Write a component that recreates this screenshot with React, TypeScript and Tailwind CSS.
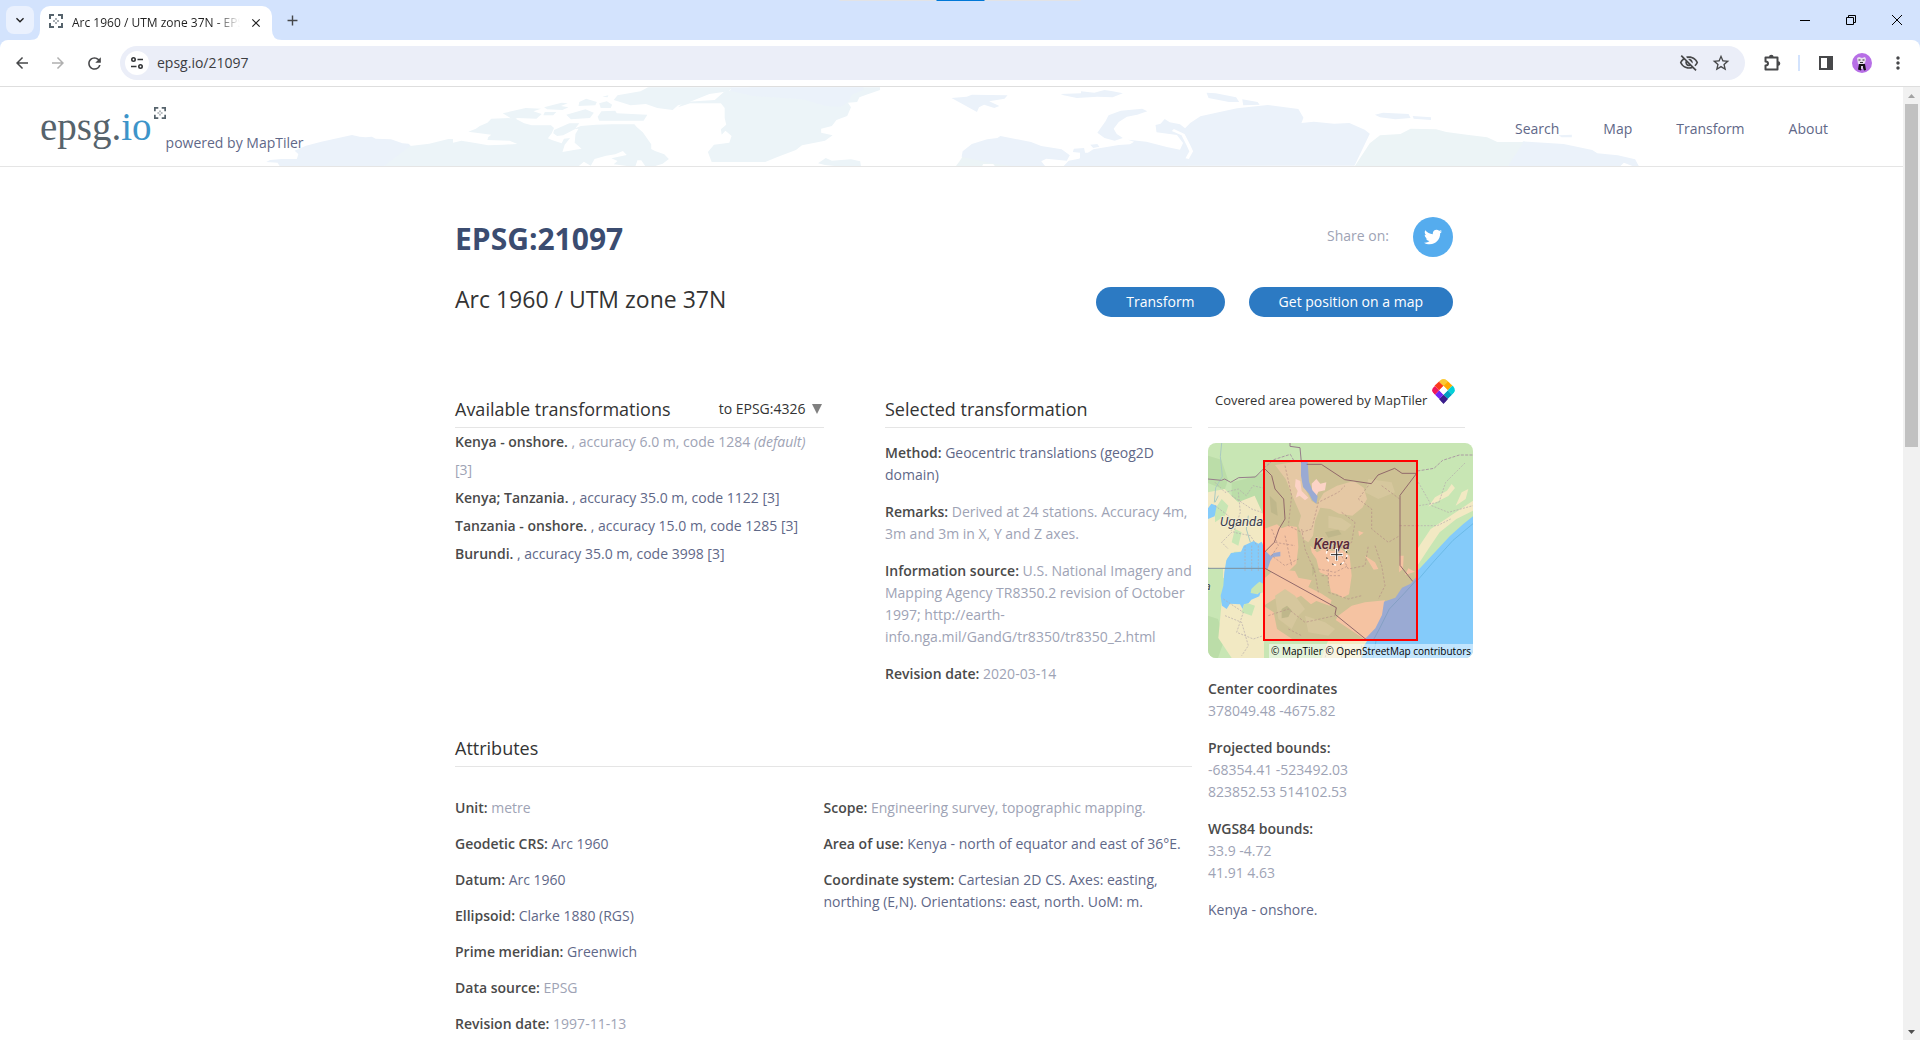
import type { ReactNode } from "react";
import {
  MdArrowBack,
  MdArrowForward,
  MdRefresh,
  MdStarBorder,
  MdOutlineVisibilityOff,
  MdMoreVert,
  MdClose,
  MdAdd,
  MdKeyboardArrowDown,
} from "react-icons/md";
import { FaTwitter } from "react-icons/fa";

function TargetMark({ className }: { className: string }) {
  return (
    <svg viewBox="0 0 14 14" className={className} fill="none" stroke="#56636c" strokeWidth="2" aria-hidden="true">
      <path d="M1 5V1h4M9 1h4v4M13 9v4H9M5 13H1V9" />
      <path d="M7 4v2M7 8v2M4 7h2M8 7h2" strokeWidth="1" />
    </svg>
  );
}

function TabStrip() {
  return (
    <div className="relative flex h-10 shrink-0 items-end bg-[#d3e3fd]">
      <div className="absolute top-0 left-1/2 flex h-px w-[241px] -translate-x-1/2 justify-center bg-[#e2e3e6]">
        <div className="h-px w-12 bg-[#0078d7]" />
      </div>
      <button aria-label="Search tabs" className="mb-1.5 ml-1.5 flex size-7 items-center justify-center rounded-lg bg-[#eaf1fe]">
        <MdKeyboardArrowDown className="size-4 text-[#1f1f1f]" stroke="currentColor" />
      </button>
      <div className="relative ml-1.5 flex h-[34px] w-[232px] items-center rounded-t-[10px] bg-white pl-[9px] pr-2">
        <svg viewBox="0 0 10 10" className="absolute bottom-0 -left-2.5 size-2.5" aria-hidden="true"><path d="M10 0v10H0Q10 10 10 0z" fill="#fff" /></svg>
        <svg viewBox="0 0 10 10" className="absolute -right-2.5 bottom-0 size-2.5" aria-hidden="true"><path d="M0 0v10h10Q0 10 0 0z" fill="#fff" /></svg>
        <TargetMark className="mb-1 size-[14px] shrink-0" />
        <span className="ml-[9px] min-w-0 flex-1 overflow-hidden whitespace-nowrap bg-linear-to-r from-[#1f1f1f] from-85% to-transparent bg-clip-text text-xs text-transparent">
          Arc 1960 / UTM zone 37N - EPSG:21097
        </span>
        <button aria-label="Close tab" className="ml-2 flex size-4 items-center justify-center">
          <MdClose className="size-3.5 text-[#1f1f1f]" stroke="currentColor" />
        </button>
      </div>
      <button aria-label="New tab" className="mb-2.5 ml-2.5 flex size-5 items-center justify-center">
        <MdAdd className="size-[17px] text-[#45474a]" />
      </button>
      <div className="mb-3 ml-auto mr-[17px] flex items-center gap-[34px] text-black">
        <button aria-label="Minimize">
          <svg viewBox="0 0 12 16" className="h-4 w-3" aria-hidden="true"><path d="M1 8.500h10" stroke="currentColor" /></svg>
        </button>
        <button aria-label="Restore">
          <svg viewBox="0 0 12 16" className="h-4 w-3" fill="none" stroke="currentColor" aria-hidden="true">
            <path d="M1.500 5.500h7v7h-7zM3.500 5.500v-2h7v7h-2" />
          </svg>
        </button>
        <button aria-label="Close window">
          <svg viewBox="0 0 12 16" className="h-4 w-3" stroke="currentColor" aria-hidden="true"><path d="M1 3l10 10M11 3L1 13" /></svg>
        </button>
      </div>
    </div>
  );
}

function Toolbar() {
  return (
    <div className="shrink-0 bg-[#d3e3fd]">
      <div className="flex h-[47px] items-center rounded-t-lg border-b border-[#dedede] bg-white pl-3">
        <button aria-label="Back" className="flex size-5 items-center justify-center"><MdArrowBack className="size-[18px] text-[#47484a]" stroke="currentColor" /></button>
        <button aria-label="Forward" className="ml-4 flex size-5 items-center justify-center"><MdArrowForward className="size-[18px] text-[#b0b0b0]" /></button>
        <button aria-label="Reload" className="ml-4 flex size-5 items-center justify-center"><MdRefresh className="size-[19px] text-[#47484a]" /></button>
        <div className="ml-4 flex h-[34px] flex-1 items-center rounded-full bg-[#ebeef8] pl-[5px] pr-3.5">
          <button aria-label="Site information" className="flex size-6 items-center justify-center rounded-full bg-white">
            <svg viewBox="0 0 14 14" className="size-3.5" fill="none" stroke="#333537" strokeWidth="1.600" aria-hidden="true">
              <circle cx="3.500" cy="3.500" r="1.700" />
              <path d="M7.500 3.500H13M1 10.500h5.500" />
              <circle cx="10.500" cy="10.500" r="1.700" />
            </svg>
          </button>
          <input
            aria-label="Address"
            defaultValue="epsg.io/21097"
            className="ml-2 min-w-0 flex-1 bg-transparent text-sm leading-5 text-[#3c3d42] outline-none"
          />
          <button aria-label="Third-party cookies blocked"><MdOutlineVisibilityOff className="size-5 text-[#47484a]" /></button>
          <button aria-label="Bookmark this page" className="ml-3"><MdStarBorder className="size-5 text-[#47484a]" stroke="currentColor" /></button>
        </div>
        <button aria-label="Extensions" className="ml-[17px]">
          <svg viewBox="0 0 20 20" className="size-5" aria-hidden="true">
            <path d="M3.500 4.500h12v12h-12v-4q2.500 0 2.500-2t-2.500-2z" fill="none" stroke="#47484a" strokeWidth="2" strokeLinejoin="round" />
            <path d="M7 4a2.300 2.300 0 0 1 4.600 0zM16 8.200a2.300 2.300 0 0 1 0 4.600z" fill="#47484a" />
          </svg>
        </button>
        <div className="ml-4 h-4 w-0.5 bg-[#d3e3fd]" />
        <button aria-label="Side panel" className="ml-[18px]">
          <svg viewBox="0 0 16 16" className="size-4" aria-hidden="true">
            <path d="M2 2h12v12H2z" fill="none" stroke="#47484a" strokeWidth="2" />
            <path d="M9 1h6v14H9z" fill="#47484a" />
          </svg>
        </button>
        <button aria-label="Profile" className="ml-[18px]">
          <svg viewBox="0 0 20 20" className="size-5" aria-hidden="true">
            <circle cx="10" cy="10" r="10" fill="#b76fe6" />
            <path d="M5 5l2-1 3 1 3-1 1 2-1 4-3 2-4-1z" fill="#e8e0ee" />
            <path d="M6.500 7h2M10.500 7h2M8 9.500h3" stroke="#333" strokeWidth="1" />
            <path d="M7 11h6l1 6-2 .5-1.500-4-1.500 4-3-1z" fill="#151018" />
            <path d="M9 13h2v3H9z" fill="#d9c9e6" />
          </svg>
        </button>
        <button aria-label="Menu" className="ml-4 mr-3"><MdMoreVert className="size-5 text-[#47484a]" /></button>
      </div>
    </div>
  );
}

function WorldBackdrop() {
  return (
    <svg className="absolute inset-y-0 left-0 h-[79px] w-[1903px]" viewBox="0 0 1903 79" fill="#ecf4f8" aria-hidden="true">
      <g transform="translate(280 -7) scale(.3827 .3333)">
        <path fill="#ebf2fa" d="M0 260l-6-12-30-2 10-6 30-3 40 0 4-15-10-10 30-15 40-12 80-20 20 5 16 2 16-2 10 6 40 2 30 12 16 1 8 9-8 60z" />
        <path d="M270 260l70-62 50-7 50-14 12 0 0 11 22-6 40 8 30 6 40-2 36-2-20-10-58-2 2-8 8-8-60-9 20-9 10-8 20-10 10-12 60-2 26 16 20 6 50 0 8 8-6 16-10 15 12 6 24 9 6-14 16-2-14 20-6 22 30-6 20-4-18-18 2-26 8-16-14 2 20-10 40-4 40-1 60 0 6 8 16 16 10 16 12 20 0 14 10 6 24 10 12 14-16 14-22 8 0 6-22-4-12-20-10 0-6 20-56-8 10-10-16-8 40-10-10-12-20 10-24 4-30 10-10 20-18-12-20 20 0 6z" />
        <path d="M582 100l60-16 40 2-20 8 22 8-14 14-50-2-10 6zM690 82l46-14 16 2-18 8 20 4-16 8-40-2zM692 96l30 0-8 10-26 0zM748 104l50-16 22 10-10 16-50 4zM782 66l18-10 28 10-4 10-44 2zM834 70l20-6 14 10-4 10-26 0zM840 94l36-2 4 8 80 4-10 18-116 0-4-12zM872 60l10-14 60-12 20-12 220 0-10 12-50 8-60 28-22 6-14 14-40-6-30-12-40 4zM716 150l40-20 26 0-12 18-30 18-16 2-10-8zM842 50l16-4-2 6z" />
        <path d="M1040 82l16-16 80-6 26-26 70-12 336 0 0 8-36 14-18 8-6 14-24 2 8 14-4 10-6 16-28 12-12 18-28 8 0 12 30 8-20 16-60 14-16 14-50 22-30 14-140 0-10-30 16-22 40-6 6-20-16-16-10 12-2-16 14-14-4-20 0-30-10-14-80 0z" />
        <path fill="#ebf2fa" d="M1180 22h344v8l-30 14-8 20-20 16-40-2-60-20-130-10-60-16z" />
        <path d="M1406 250l20-16 16 8 50-4 24 6 2 14-60 1-34-4z" />
      </g>
      <g transform="translate(880 -7) scale(.5102 .3333)" fill="#ebf2fa">
        <path d="M140 54l30-4 10-6 70 2-6 10-30 8 20 14-10 6-20-10-10 8-4 14-40-34zM354 42l40-2 0-6 26 4 20-8 16 4 20 6-20 12-30-2-40 4-26-8zM514 86l10 8-20 10-20 6-16 16-10 20 6 16 12 12-16 8-20-8-14-16 16-34 6-18 24-14zM640 38l18 2 40 12 6 14-20 0-40-12zM710 58l30 8 4 8-32 2z" />
        <path fill="#ecf4f6" d="M148 260l8-16 10-24 40 4 60 36h-40l-4-8-20 0-2 8z" />
        <path d="M160 230l2-16 18-22 30-14 20-4 6-6 60 18 20 12 40 10 16 18-6 16-40-6-10 8 8 15h-60l-40-8z" />
        <path d="M360 258l10-16 20-6 14-14 14-14 50-13 22-2 8-8-12-6 36 6 40 16 26 8 6-20-12-24-40-8-2-22 10-4 8-14 10 10 20 6 10 12 10-16 20-20 40-14 32-10 60-10 60 12 10 26-4 16 24-4 40 6 30-2 30 20 10 12-30 96z" />
        <path fill="#ecf4f6" d="M930 260l30-70 20-24 40-4 20-16 50 2 20 8 40 8 40 8 20 14 50 0 60 12-30 62z" />
        <path d="M1230 260l30-70 0-6 80 8 56 18 10 10 40 6 34 12 8 22-10 0-20-12-8 12zM970 104l16-6 50 4 4 12-30 4-30-6zM1044 108l36 4 0 8-34-4zM1330 166l26-2 0 8-20 0zM380 206l20-2 2 14 16 0-16 20-10 2 0-22-14-2zM412 194l14-2 4 8-12 4z" />
        <path fill="none" stroke="#fff" strokeWidth="7" d="M574 150l20 14 10 30 6 20-8 22" />
      </g>
    </svg>
  );
}

const navLinks = ["Search", "Map", "Transform", "About"];

function SiteHeader() {
  return (
    <header className="relative flex h-20 shrink-0 items-center overflow-hidden border-b border-[#e5e5e5] pl-10 pr-[75px]">
      <WorldBackdrop />
      <a href="#home" className="relative flex h-full items-start pt-4" aria-label="epsg.io">
        <span className="font-['Liberation_Serif',serif] text-[39px] leading-[47px] text-[#56636c]">
          epsg.<span className="text-[#3d94c9]">io</span>
        </span>
        <TargetMark className="mt-1 ml-0.5 size-3" />
      </a>
      <a href="#maptiler" className="relative mt-8 leading-5 text-[#5f6888]">powered by MapTiler</a>
      <nav className="relative ml-auto flex gap-11 pt-1 text-[#5f6888]">
        {navLinks.map((label) => (
          <a key={label} href={"#" + label.toLowerCase()}>{label}</a>
        ))}
      </nav>
    </header>
  );
}

function MapTilerMark() {
  return (
    <svg viewBox="0 0 70 76" className="h-[25px] w-[23px]" aria-hidden="true">
      <clipPath id="pin"><path d="M24 5Q35-4 46 5L65 23Q74 34 65 45L35 76 5 45Q-4 34 5 23z" /></clipPath>
      <g clipPath="url(#pin)">
        <path fill="#fbc935" d="M35-6l24 14-24 14-13-13z" />
        <path fill="#fbc935" d="M22 9l13 13L48 9V-4H22z" />
        <path fill="#ffaa01" d="M48 9V2l20 13-7 6-13 13-13-13z" />
        <path fill="#03d1d9" d="M61 21l5-4 9 17-14 14-13-14z" />
        <path fill="#00a1c1" d="M48 34l13 14-13 13-13-13z" />
        <path fill="#3b1e8c" d="M35 48l14 13-14 18-14-18z" />
        <path fill="#7226f5" d="M22 34l13 14-13 13L9 48z" />
        <path fill="#f1175d" d="M9 21l13 13L9 48-5 34z" />
        <path fill="#fb3a1b" d="M22 9V2L2 15l7 6 13 13 13-13z" />
        <path fill="#fff" d="M35 21l13 13-13 13-13-13z" />
      </g>
    </svg>
  );
}

function CoverageMap() {
  return (
    <div className="relative w-[265px] overflow-hidden rounded-lg">
      <svg viewBox="39 42 795 645" className="block h-[215px] w-full" role="img" aria-label="Map of Kenya with the covered area outlined">
        <path fill="#c8e6b4" d="M39 42h795v645H39z" />
        <path fill="#bbdda8" d="M39 80l40 12 20 60-10 30-50-20zM110 160l40-10 60-20v160l-30-20-10-40-60-20zM39 560l30 10 20 60-20 57H39z" />
        <path fill="#f2e9c3" d="M39 190l50-10 40 40 50-20 27 60v80l-27 28-60 0-22 20-10 60-48-35zM80 520l40-10 87-20v197H110l-40-60z" />
        <path fill="#c8e6b4" d="M60 240l20-30 20 20-10 30-30 20zM120 300l20 10-10 40-20-10zM39 420h45v90l-20 40-25-10zM150 520l30 10-10 30-30-10z" />
        <path fill="#f2e9c3" d="M834 245l-50 25-50 40-34 50-33 50v-50l40-60 60-40 67-45zM770 165l-14 20-36 20-20 28 20-12 40-20 20-24zM800 190l20-10-8 30-30 20zM400 632h140l-20 55H380z" />
        <path fill="#84cbfa" d="M834 262l-30 24-40 36-50 54-47 50-35 36-40 60-60 90-25 38-6 37h333z" />
        <path fill="none" stroke="#5fb1dd" strokeWidth="2" d="M834 284l-60 50-60 66-60 70-60 70-50 90-10 57" />
        <path fill="#84cbfa" d="M88 430l6-36 14-22 30-4 8-18 30-14 14 8 10-6 7 20v76l-2 30-12-6-14 12-10 10-2 12 20 4 10-8-4 14-24 10-8 10-14 4-4 14-8-14-30-2-10 16-14-10-4-30 8-30zM39 270l20-8 6-32-16-6-10 14z" />
        <path fill="none" stroke="#a9c9c0" strokeWidth="3" d="M80 42l-4 40 6 60-20 34-4 44M60 220l10-20M160 260l-6 40 12 40" />
        <path fill="none" stroke="#b4a9ac" strokeWidth="2" strokeDasharray="6 4" d="M60 160l30 30 40-10 24 20 20-30 34 8M60 230l40 30 10 50-30 30 20 20M110 200l60 40 30 10M130 190l6 60-20 60 50 10 20 30M150 350v80M170 350v80M190 350v80M85 510l60 40-20 60 50 20 30-10M90 560l50 20 20 70-20 30M670 160l40 70 50 20 74-20M672 230l60-10 20-60 60-60M667 290h60l40-20M500 650v37M440 650v37M400 650l-10 37" />
        <g stroke="none">
          <path fill="#cdc194" d="M206 95h461v538H206z" />
          <path fill="#e5c8a4" d="M240 108l80-12 8 40-8 20 14 30 16 30 16 10 20-34 40-22 50-14 30 20 10 34-14 26-30 24-40-6-26-14-30-4-16 40-6 44-14 20-16-10-14-40 8-30-26-60-20-50z" />
          <path fill="#fcd3c6" d="M302 150l14 6 4 30 20 20-10 8-16-14-12 6 6-20-8-14zM350 164l14-14 12 14 18-4-4 24-20 4-8 18-10-16z" />
          <path fill="#f5c3a2" d="M206 300l40-14 14 12 20-8 26 4 4 60-6 50-20 20-30 0-14 10-34-14zM240 420l60 6 10 20 40 8-10 20 40 20 30 20-6 16-40-14-16 10-30-26-20 10-30-14-30 14-32 20v-80zM346 350l20 20 18-10 30 6 20-10 30 24 6 60-8 56-20 10-14-10-20-6-10-50-24-10-10-40-14-20zM430 560l40-30 40-10 60-6-8 50-26 50-16 19h-8l-90-60zM206 530l30 20 10 50 50 33h-90zM510 380l30 20 10 20-14 2zM614 380h12l-2 40-12 10zM640 418l20 10-30 10zM490 305l16 6-14 10z" />
          <path fill="#d6c79d" d="M240 500l30-20 30 20 30 40-20 20-20 40-40-30zM330 560l60 20 30 20-20 20-60-10zM400 260l40 8 30 20-20 18-50-10zM520 150l70 10 10 30-50 20-40-20z" />
          <path fill="#bfb78b" d="M260 540l16-10 14 14-10 20-20 4zM352 400l10 26-10 16zM390 310l40-8 10 14-40 10zM224 200l20 20 4 40-20-10z" />
          <path fill="#9aaad3" d="M318 98h20l4 60 10 26 16 18-4 22-12-10-10-20-18-20-6-34zM206 360l20 20 10-8 20-4 0 14-22 2-8 12-8 24-12 2zM667 440l-20 24-26 12-20 30-34 12-6 40-20 40-34 35h160z" />
        </g>
        <path fill="none" stroke="#85a0c4" strokeWidth="3" d="M667 450l-40 44-44 46-30 60-18 33" />
        <path fill="none" stroke="#b58f86" strokeWidth="2" strokeDasharray="7 5" d="M270 110l20 90-10 90 40 20 30-10 20-80 60-30 20-20M520 170l-30 40 40 30v60l50 40 34-20M440 250l40 30-10 60-40 20 30 60 50-10 10-60M560 170l54 40M614 290h50M540 350l20 60 10 60-20 40M320 300l10 60 30 70 10 60M370 420l50 10 40-20M400 490l60 20 40-10M230 300l20 50-20 30 40 30 40-20M240 340l60 10M270 320l20 90M220 560l60-20 50 40 90-20M280 600l40 20M380 440h60M400 420v50" />
        <path fill="none" stroke="#967c8a" strokeWidth="3" d="M39 150l40 4 10-4 18 10 24-14 50-2 24-24M285 42v10l30 4 4 44" />
        <path fill="none" stroke="#aa9aa2" strokeWidth="3" strokeDasharray="9 4" d="M206 118l30-26 50-16 10 18M667 126l50-8 26-24 50-16h41" />
        <path fill="none" stroke="#91696a" strokeWidth="3" d="M210 120l20 20 10 40 26 30 4 60-18 30-14 40-30 30M335 106h44l70 46 80 12 20-26 50-20 22 15h44l-50 66v210l38 48M206 416l218 120-4 20 94 76" />
        <path stroke="#7d909c" strokeWidth="3" d="M39 418h167" />
        <path fill="none" stroke="#f00" strokeWidth="6" d="M207 96h459v537H207z" />
        <g fill="none">
          <circle cx="425" cy="377" r="31" stroke="#fff" strokeWidth="4" strokeDasharray="9 16" />
          <circle cx="425" cy="377" r="31" stroke="#222" strokeWidth="3" strokeDasharray="5 20" strokeDashoffset="-8" />
        </g>
        <g fontFamily="Roboto, sans-serif" fontStyle="italic" paintOrder="stroke" strokeWidth="4">
          <text x="75" y="291" fontSize="39" fill="#3a3c4c" stroke="#f4f0da">Uganda</text>
          <text x="356" y="360" fontSize="41" fontWeight="500" fill="#57283a" stroke="#e4c8a8">Kenya</text>
          <text x="29" y="482" fontSize="34" fill="#3a3c4c" stroke="#dcebc0">a</text>
        </g>
        <path d="M425 358v38M406 377h38" stroke="#fff" strokeWidth="8" />
        <path d="M425 360v34M408 377h34" stroke="#222" strokeWidth="3" />
      </svg>
      <p className="absolute right-0 bottom-0 bg-white/50 px-0.5 text-[10px] leading-[14px] whitespace-nowrap text-black">
        <a href="#tiles">© MapTiler</a> <a href="#osm">© OpenStreetMap contributors</a>
      </p>
    </div>
  );
}

type FieldProps = { label: string; link?: boolean; children: ReactNode };

function Field({ label, link, children }: FieldProps) {
  return (
    <p>
      <span className="font-semibold text-[#4a4a4a]">{label}</span>{" "}
      {link ? <a href="#detail" className="text-[#5f6888]">{children}</a> : children}
    </p>
  );
}

function SectionTitle({ children }: { children: ReactNode }) {
  return <h3 className="h-[34px] border-b border-[#e5e5e5] text-lg leading-[30px] text-[#333]">{children}</h3>;
}

const transformations = [
  { name: "Kenya; Tanzania.", detail: ", accuracy 35.0 m, code 1122 [3]" },
  { name: "Tanzania - onshore.", detail: ", accuracy 15.0 m, code 1285 [3]" },
  { name: "Burundi.", detail: ", accuracy 35.0 m, code 3998 [3]" },
];

function Transformations() {
  return (
    <section className="w-1/2">
      <div className="flex h-[34px] items-start justify-between border-b border-[#e5e5e5] leading-[30px]">
        <h3 className="text-lg leading-[30px] text-[#333]">Available transformations</h3>
        <button className="flex items-center gap-1.5 pr-0.5 text-[#333]">
          to EPSG:4326
          <svg viewBox="0 0 10 10" className="size-2.5" aria-hidden="true"><path d="M0 0h10L5 10z" fill="#808080" /></svg>
        </button>
      </div>
      <ul className="leading-7">
        <li>
          <span className="font-semibold text-[#4a4a4a]">Kenya - onshore.</span> , accuracy 6.0 m, code 1284 <i>(default)</i> [3]
        </li>
        {transformations.map((item) => (
          <li key={item.name}>
            <a href="#transformation" className="text-[#5f6888]">
              <span className="font-semibold text-[#4a4a4a]">{item.name}</span> {item.detail}
            </a>
          </li>
        ))}
      </ul>
    </section>
  );
}

function Content() {
  return (
    <main className="mx-auto max-w-[1027px] pt-[50px] pl-[17px] text-[#9ea3b5]">
      <div className="flex h-10 items-center justify-between pr-3">
        <h1 className="pt-1 text-[30px] leading-10 font-bold text-[#3b4c70]">EPSG:21097</h1>
        <div className="flex items-start gap-6">
          <span className="pt-2">Share on:</span>
          <a href="#twitter" aria-label="Twitter" className="flex size-10 items-center justify-center rounded-full bg-[#55acee]">
            <FaTwitter className="size-[18px] text-white" />
          </a>
        </div>
      </div>
      <div className="mt-[30px] flex h-[30px] items-start justify-between pr-3">
        <h2 className="text-[23px] leading-6 text-[#333]">Arc 1960 / UTM zone 37N</h2>
        <div className="flex gap-6 font-medium text-white">
          <button className="h-[30px] rounded-full bg-[#2c7ac3] px-[30px]">Transform</button>
          <button className="h-[30px] rounded-full bg-[#2c7ac3] px-[30px]">Get position on a map</button>
        </div>
      </div>

      <div className="mt-[62px] flex gap-4">
        <div className="flex-1 pt-[15px]">
          <div className="flex justify-between">
            <Transformations />
            <section className="w-[307px]">
              <SectionTitle>Selected transformation</SectionTitle>
              <div className="mt-3.5 flex flex-col gap-[15px]">
                <Field label="Method:" link>Geocentric translations (geog2D domain)</Field>
                <Field label="Remarks:">Derived at 24 stations. Accuracy 4m, 3m and 3m in X, Y and Z axes.</Field>
                <Field label="Information source:">
                  U.S. National Imagery and Mapping Agency TR8350.2 revision of October 1997; http://earth-info.nga.mil/GandG/tr8350/tr8350_2.html
                </Field>
                <Field label="Revision date:">2020-03-14</Field>
              </div>
            </section>
          </div>

          <section className="mt-12">
            <SectionTitle>Attributes</SectionTitle>
            <div className="mt-[30px] grid grid-cols-2">
              <div className="flex flex-col gap-3.5">
                <Field label="Unit:">metre</Field>
                <Field label="Geodetic CRS:" link>Arc 1960</Field>
                <Field label="Datum:" link>Arc 1960</Field>
                <Field label="Ellipsoid:" link>Clarke 1880 (RGS)</Field>
                <Field label="Prime meridian:" link>Greenwich</Field>
                <Field label="Data source:">EPSG</Field>
                <Field label="Revision date:">1997-11-13</Field>
              </div>
              <div className="flex flex-col gap-3.5">
                <Field label="Scope:">Engineering survey, topographic mapping.</Field>
                <Field label="Area of use:" link>Kenya - north of equator and east of 36°E.</Field>
                <Field label="Coordinate system:" link>
                  Cartesian 2D CS. Axes: easting, northing (E,N). Orientations: east, north. UoM: m.
                </Field>
              </div>
            </div>
          </section>
        </div>

        <aside className="w-[257px]">
          <a href="#maptiler" className="flex h-[49px] items-start gap-[5px] border-b border-[#e5e5e5] pl-[7px] text-[13px] text-[#333]">
            <span className="pt-2.5 whitespace-nowrap">Covered area powered by MapTiler</span>
            <MapTilerMark />
          </a>
          <div className="mt-[15px]"><CoverageMap /></div>
          <div className="mt-5 flex flex-col gap-[15px]">
            <div>
              <h4 className="font-semibold text-[#4a4a4a]">Center coordinates</h4>
              <p>378049.48 -4675.82</p>
            </div>
            <div>
              <h4 className="font-semibold text-[#4a4a4a]">Projected bounds:</h4>
              <p>-68354.41 -523492.03</p>
              <p>823852.53 514102.53</p>
            </div>
            <div>
              <h4 className="font-semibold text-[#4a4a4a]">WGS84 bounds:</h4>
              <p>33.9 -4.72</p>
              <p>41.91 4.63</p>
            </div>
            <p><a href="#area" className="text-[#5f6888]">Kenya - onshore.</a></p>
          </div>
        </aside>
      </div>
    </main>
  );
}

function ScrollRail() {
  return (
    <div className="flex w-[17px] shrink-0 flex-col items-center bg-[#f1f1f1]" aria-hidden="true">
      <svg viewBox="0 0 17 17" className="size-[17px] shrink-0"><path d="M5 11h7L8.500 7z" fill="#a3a3a3" /></svg>
      <div className="h-[36%] w-[13px] bg-[#c1c1c1]" />
      <svg viewBox="0 0 17 17" className="mt-auto size-[17px] shrink-0"><path d="M5 7h7l-3.500 4z" fill="#505050" /></svg>
    </div>
  );
}

export default function App() {
  return (
    <div className="flex h-screen flex-col overflow-hidden bg-white font-['Open_Sans',sans-serif] text-sm leading-[22px]">
      <TabStrip />
      <Toolbar />
      <div className="flex min-h-0 flex-1">
        <div className="min-w-0 flex-1 overflow-hidden">
          <SiteHeader />
          <Content />
        </div>
        <ScrollRail />
      </div>
    </div>
  );
}
